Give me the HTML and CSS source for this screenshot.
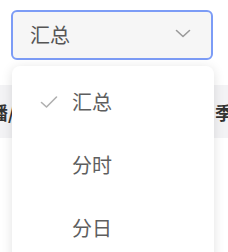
FILE: index.html
```html
<!DOCTYPE html>
<html lang="zh">
<head>
  <meta charset="UTF-8">
  <meta name="viewport" content="width=device-width, initial-scale=1.0">
  <title>汇总</title>
  <link rel="stylesheet" href="styles.css">
</head>
<body>
  <div class="page">
    <div class="select">
      <span class="select-value">汇总</span>
      <svg class="arrow" width="16" height="9" viewBox="0 0 16 9">
        <path d="M1.5 1.5 L8 7.5 L14.5 1.5" fill="none" stroke="#9a9a9a" stroke-width="1.6" stroke-linecap="round" stroke-linejoin="round"/>
      </svg>
    </div>

    <div class="table-head">
      <span class="cell first">首播/</span>
      <span class="cell last">季度</span>
    </div>

    <!-- dropdown menu over the table -->
    <ul class="menu">
      <li class="option active">
        <svg class="check" width="18" height="14" viewBox="0 0 18 14">
          <path d="M1.5 7.5 L6.5 12 L16.5 2" fill="none" stroke="#b0b0b0" stroke-width="1.6" stroke-linecap="round" stroke-linejoin="round"/>
        </svg>
        <span>汇总</span>
      </li>
      <li class="option"><span>分时</span></li>
      <li class="option"><span>分日</span></li>
    </ul>
  </div>
</body>
</html>
```

FILE: styles.css
```css
body {
  margin: 0;
  background-color: #fff;
  font-family: "Noto Sans CJK SC", "Noto Sans", sans-serif;
}

.page {
  position: relative;
  height: 252px;
  padding-top: 10px;
  box-sizing: border-box;
  overflow: hidden;
}

.select {
  margin: 0 15px 0 11px;
  height: 46px;
  border: 2px solid #7c9cf6;
  border-radius: 6px;
  background-color: #f6f6f6;
  display: flex;
  align-items: center;
  justify-content: space-between;
  padding: 0 20px 0 17px;
  font-size: 20px;
  color: #555;
}

.select-value {
  margin-top: -2px;
}

.arrow {
  display: block;
  margin-top: -3px;
}

.table-head {
  margin-top: 25px;
  height: 53px;
  background-color: #f3f3f5;
  display: flex;
  justify-content: space-between;
  align-items: center;
  overflow: hidden;
  font-size: 18px;
  font-weight: bold;
  color: #333;
}

.cell.first {
  margin-left: -28px;
}

.cell.last {
  margin-right: -23px;
}

/* Dropdown */
.menu {
  position: absolute;
  left: 12px;
  top: 66px;
  width: 202px;
  height: 220px;
  margin: 0;
  padding: 4px 0 0;
  list-style: none;
  background-color: #fff;
  border-radius: 8px;
  box-shadow: 0 2px 12px rgba(0, 0, 0, 0.12);
}

.option {
  height: 63px;
  display: flex;
  align-items: center;
  padding-left: 60px;
  font-size: 20px;
  color: #5e5e5e;
}

.option.active {
  padding-left: 28px;
}

.check {
  display: block;
  margin-right: 14px;
}
```
